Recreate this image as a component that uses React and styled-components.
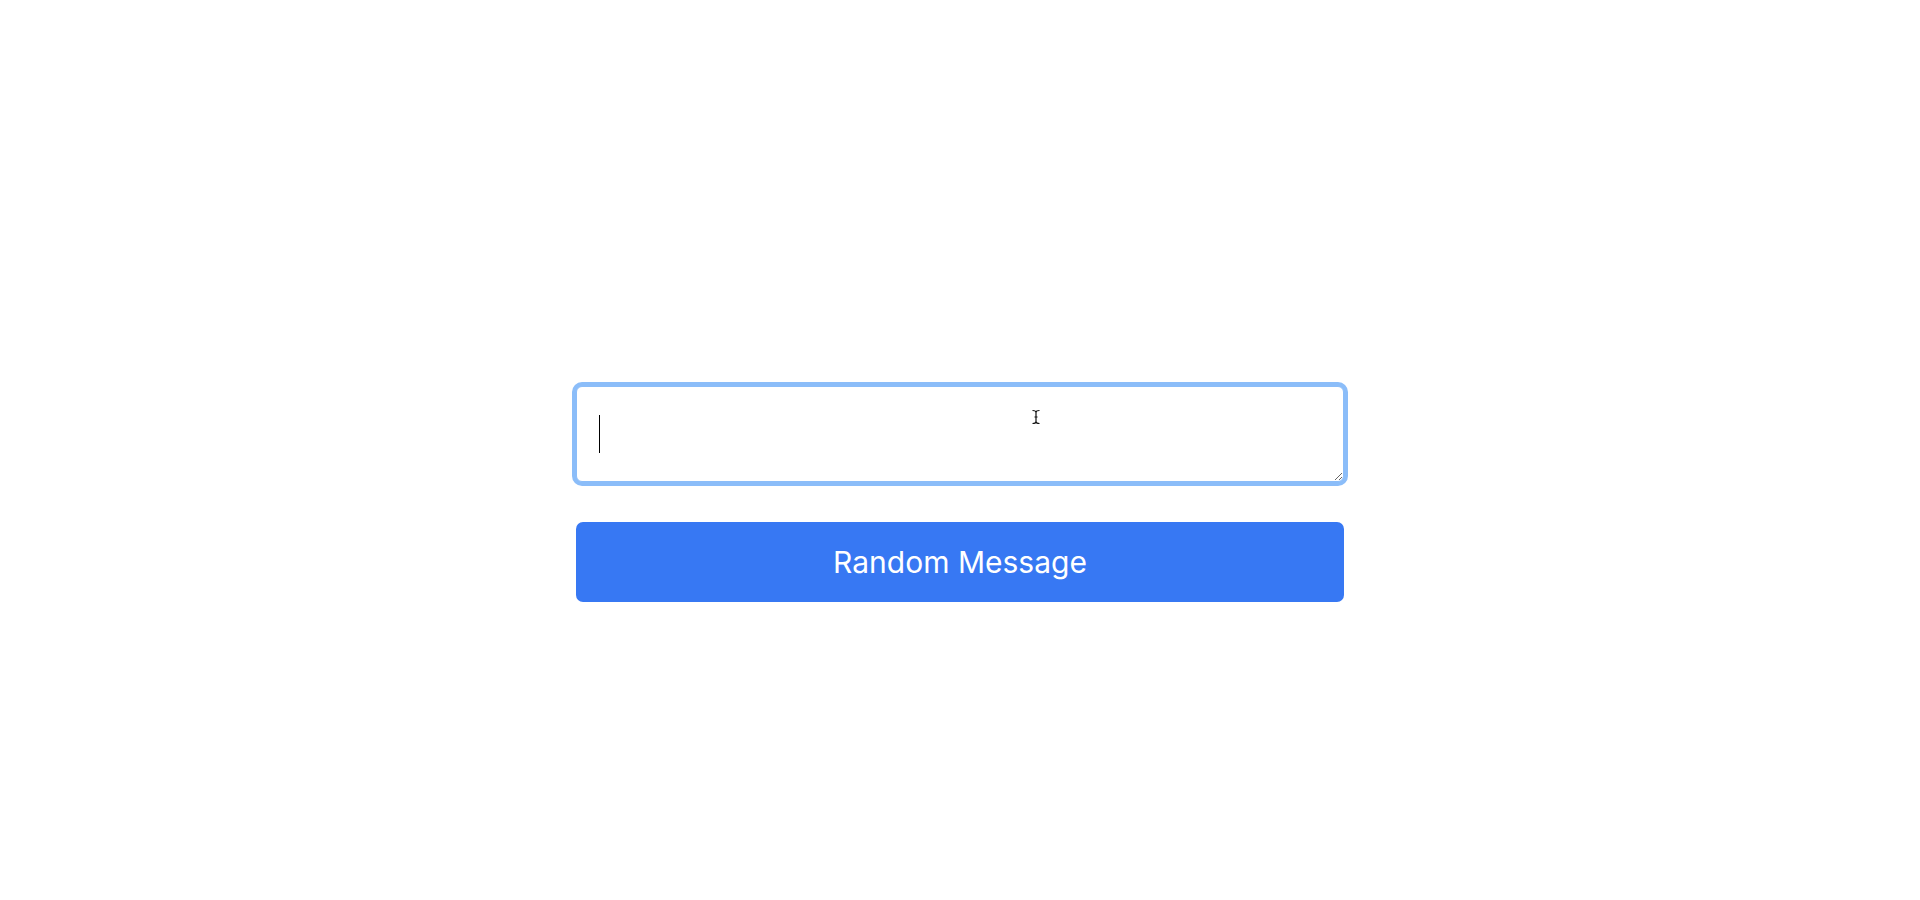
import React from 'react';
import styled, { createGlobalStyle } from 'styled-components';

const GlobalStyle = createGlobalStyle`
  html, body {
    margin: 0;
    padding: 0;
    background: #ffffff;
    font-family: Inter, "Noto Sans", sans-serif;
  }
  * {
    box-sizing: border-box;
  }
`;

export default function App() {
  return (
    <>
      <GlobalStyle />
      <Page>
        <Form onSubmit={e => e.preventDefault()}>
          <Field>
            <MessageInput autoFocus defaultValue="" />
            <Caret />
          </Field>
          <RandomButton type="button">Random Message</RandomButton>
        </Form>
        <Pointer width="10" height="16" viewBox="0 0 10 16">
          <path
            d="M1.5 1.5 Q5 1.5 5 3.5 Q5 1.5 8.5 1.5 M5 3.5 V12.5 M1.5 14.5 Q5 14.5 5 12.5 Q5 14.5 8.5 14.5 M3.5 8 H6.5"
            fill="none"
            stroke="#111"
            strokeWidth="1.2"
          />
        </Pointer>
      </Page>
    </>
  );
}

const Page = styled.div`
  position: relative;
  width: 100%;
  height: 900px;
  display: flex;
  justify-content: center;
  padding-top: 386px;
`;

const Form = styled.form`
  display: flex;
  flex-direction: column;
  align-items: center;
  gap: 40px;
  width: 768px;
`;

const Field = styled.div`
  position: relative;
  width: 768px;
  height: 96px;
`;

const MessageInput = styled.textarea`
  display: block;
  width: 768px;
  height: 96px;
  padding: 24px 22px;
  border: 1px solid #8bbdf9;
  border-radius: 6px;
  box-shadow: 0 0 0 4px #8bbdf9;
  outline: none;
  font-family: Inter, "Noto Sans", sans-serif;
  font-size: 30px;
  line-height: 1.5;
  color: #111;
  caret-color: transparent;
  resize: vertical;
  background: #fff;
`;

const Caret = styled.span`
  position: absolute;
  left: 23px;
  top: 29px;
  width: 1px;
  height: 38px;
  background: #000;
  pointer-events: none;
`;

const RandomButton = styled.button`
  width: 768px;
  height: 80px;
  border: none;
  border-radius: 7px;
  background: #3778f3;
  color: #ffffff;
  font-family: Inter, "Noto Sans", sans-serif;
  font-size: 30px;
  font-weight: 400;
  cursor: pointer;
`;

const Pointer = styled.svg`
  position: absolute;
  left: 1031px;
  top: 409px;
  pointer-events: none;
`;
